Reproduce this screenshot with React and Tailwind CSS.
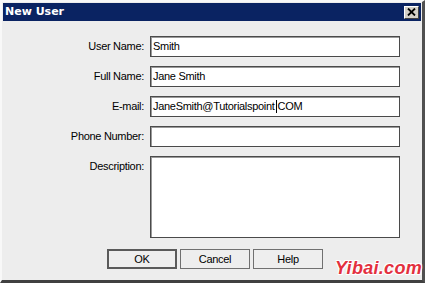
import React from "react";

const fields = [
  { label: "User Name:", value: "Smith" },
  { label: "Full Name:", value: "Jane Smith" },
  { label: "E-mail:", value: "email" },
  { label: "Phone Number:", value: "" },
];

const Field = ({ label, value }) => (
  <div className="flex items-center h-[21px]">
    <div className="w-[142px] text-right pr-[1px]">{label}</div>
    <div className="ml-[5px] w-[250px] h-[21px] bg-white border border-[#4a4a4a] shadow-[inset_1px_1px_0_#9a9a9a] flex items-center pl-[2px] whitespace-nowrap">
      {value === "email" ? (
        <>
          <span>JaneSmith@Tutorialspoint</span>
          <span className="inline-block w-[1px] h-[13px] bg-black ml-[1px] mr-[1px]" />
          <span>COM</span>
        </>
      ) : (
        value
      )}
    </div>
  </div>
);

const Button = ({ children, primary }) => (
  <div
    className={`w-[70px] h-[20px] flex items-center justify-center bg-[#eeeeee] ${
      primary
        ? "border-2 border-[#5a5a5a]"
        : "border border-[#707070]"
    }`}
  >
    {children}
  </div>
);

export default function App() {
  return (
    <div
      className="w-[425px] h-[283px] bg-[#ededed] border-t-2 border-l-2 border-t-[#f8f8f8] border-l-[#f8f8f8] border-r-[3px] border-b-[3px] border-r-[#505050] border-b-[#404040] text-[11px] tracking-[-0.3px] text-black flex flex-col pt-[1px] pl-[1px] pr-[1px]"
      style={{ fontFamily: '"Liberation Sans", Arial, sans-serif' }}
    >
      {/* title bar */}
      <div className="h-[18px] bg-[#0a2362] flex items-center justify-between pl-[2px] pr-[2px]">
        <span
          className="text-white font-bold tracking-normal"
          style={{ fontFamily: '"DejaVu Sans", sans-serif', fontSize: "11px" }}
        >
          New User
        </span>
        <div className="w-[15px] h-[13px] bg-[#d4d0c8] border border-t-white border-l-white border-r-[#404040] border-b-[#404040] flex items-center justify-center">
          <svg width="9" height="8" viewBox="0 0 9 8">
            <path d="M1 0.5 L8 7.5 M8 0.5 L1 7.5" stroke="black" strokeWidth="1.8" />
          </svg>
        </div>
      </div>

      {/* body */}
      <div className="flex-1 flex flex-col pt-[15px] gap-[9px]">
        {fields.map((f) => (
          <Field key={f.label} label={f.label} value={f.value} />
        ))}
        <div className="flex items-start">
          <div className="w-[142px] text-right pr-[1px] pt-[2px]">Description:</div>
          <div className="ml-[5px] w-[250px] h-[82px] bg-white border border-[#4a4a4a] shadow-[inset_1px_1px_0_#9a9a9a]" />
        </div>
        <div className="flex items-center mt-[2px] pl-[104px] gap-[3px] relative">
          <Button primary>OK</Button>
          <Button>Cancel</Button>
          <Button>Help</Button>
          <span
            className="absolute right-[-1px] top-[6px] italic font-bold text-[18px] text-[#e3303e] tracking-[0.3px] [text-shadow:1px_1px_0_#fff,-1px_-1px_0_#fff,1px_-1px_0_#fff,-1px_1px_0_#fff]"
            style={{ fontFamily: '"Liberation Sans", Arial, sans-serif' }}
          >
            Yibai.com
          </span>
        </div>
      </div>
    </div>
  );
}
